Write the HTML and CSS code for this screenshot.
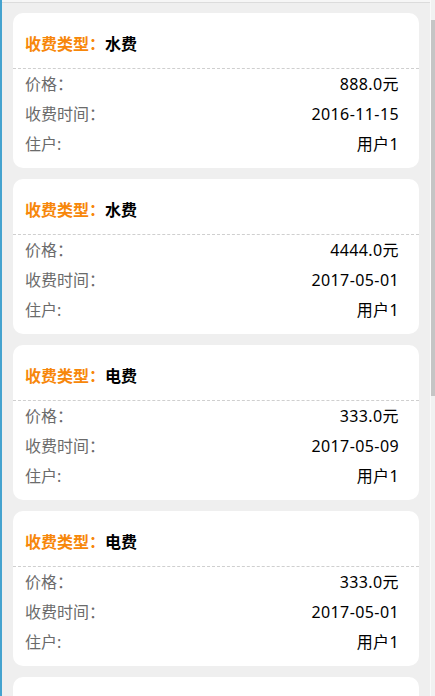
FILE: index.html
```html
<!DOCTYPE html>
<html lang="zh-CN">
<head>
  <meta charset="UTF-8" />
  <meta name="viewport" content="width=device-width, initial-scale=1" />
  <title>缴费记录</title>
  <link rel="stylesheet" href="styles.css">
</head>
<body>
  <div class="frame">
    <div class="edge"></div>
    <div class="page">
      <div class="topline"></div>
      <div class="list">
        <div class="card">
          <div class="card-head"><span class="key">收费类型<span class="colon">：</span></span><span class="type">水费</span></div>
          <div class="row"><span class="label">价格<span class="colon">：</span></span><span class="value">888.0元</span></div>
          <div class="row"><span class="label">收费时间<span class="colon">：</span></span><span class="value">2016-11-15</span></div>
          <div class="row"><span class="label">住户:</span><span class="value">用户1</span></div>
        </div>
        <div class="card">
          <div class="card-head"><span class="key">收费类型<span class="colon">：</span></span><span class="type">水费</span></div>
          <div class="row"><span class="label">价格<span class="colon">：</span></span><span class="value">4444.0元</span></div>
          <div class="row"><span class="label">收费时间<span class="colon">：</span></span><span class="value">2017-05-01</span></div>
          <div class="row"><span class="label">住户:</span><span class="value">用户1</span></div>
        </div>
        <div class="card">
          <div class="card-head"><span class="key">收费类型<span class="colon">：</span></span><span class="type">电费</span></div>
          <div class="row"><span class="label">价格<span class="colon">：</span></span><span class="value">333.0元</span></div>
          <div class="row"><span class="label">收费时间<span class="colon">：</span></span><span class="value">2017-05-09</span></div>
          <div class="row"><span class="label">住户:</span><span class="value">用户1</span></div>
        </div>
        <div class="card">
          <div class="card-head"><span class="key">收费类型<span class="colon">：</span></span><span class="type">电费</span></div>
          <div class="row"><span class="label">价格<span class="colon">：</span></span><span class="value">333.0元</span></div>
          <div class="row"><span class="label">收费时间<span class="colon">：</span></span><span class="value">2017-05-01</span></div>
          <div class="row"><span class="label">住户:</span><span class="value">用户1</span></div>
        </div>
        <!-- next record, scrolled out of view -->
        <div class="card card-stub"></div>
      </div>
    </div>
    <div class="scrollbar"><div class="thumb"></div></div>
  </div>
</body>
</html>
```

FILE: styles.css
```css
html, body {
  margin: 0;
  padding: 0;
}
body {
  font-family: "Noto Sans", "Noto Sans CJK SC", sans-serif;
  background-color: #efefef;
}
.frame {
  display: flex;
  height: 696px;
  overflow: hidden;
}
.edge {
  width: 2px;
  background-color: #45a3cf;
}
.page {
  flex: 1;
  overflow: hidden;
}
.topline {
  height: 2px;
  background-color: #f6f6f6;
  border-bottom: 1px solid #dcdcdc;
}
.list {
  display: flex;
  flex-direction: column;
  gap: 11px;
  padding: 10px 11px 0 11px;
}
.card {
  background: #fff;
  border-radius: 10px;
  padding-bottom: 9px;
}
.card-stub {
  height: 146px;
}
.card-head {
  display: flex;
  align-items: center;
  height: 22px;
  padding: 20px 12px 13px;
  font-size: 16px;
  font-weight: bold;
  border-bottom: 1px dashed #cfcfcf;
}
.colon {
  font-family: "Noto Sans CJK TC", sans-serif;
  line-height: 1;
}
.key {
  color: #f7870a;
  line-height: 22px;
}
.type {
  color: #000;
  line-height: 22px;
}
.row {
  display: flex;
  justify-content: space-between;
  align-items: center;
  height: 30px;
  padding: 0 20px 0 12px;
  font-size: 16px;
  line-height: 20px;
}
.label {
  color: #6b6b6b;
}
.value {
  color: #000;
  letter-spacing: 0.4px;
}
.scrollbar {
  width: 4px;
  background-color: #f1f1f1;
  border-left: 1px solid #fafafa;
  padding-top: 20px;
}
.thumb {
  height: 376px;
  background-color: #c5c5c5;
}
```
